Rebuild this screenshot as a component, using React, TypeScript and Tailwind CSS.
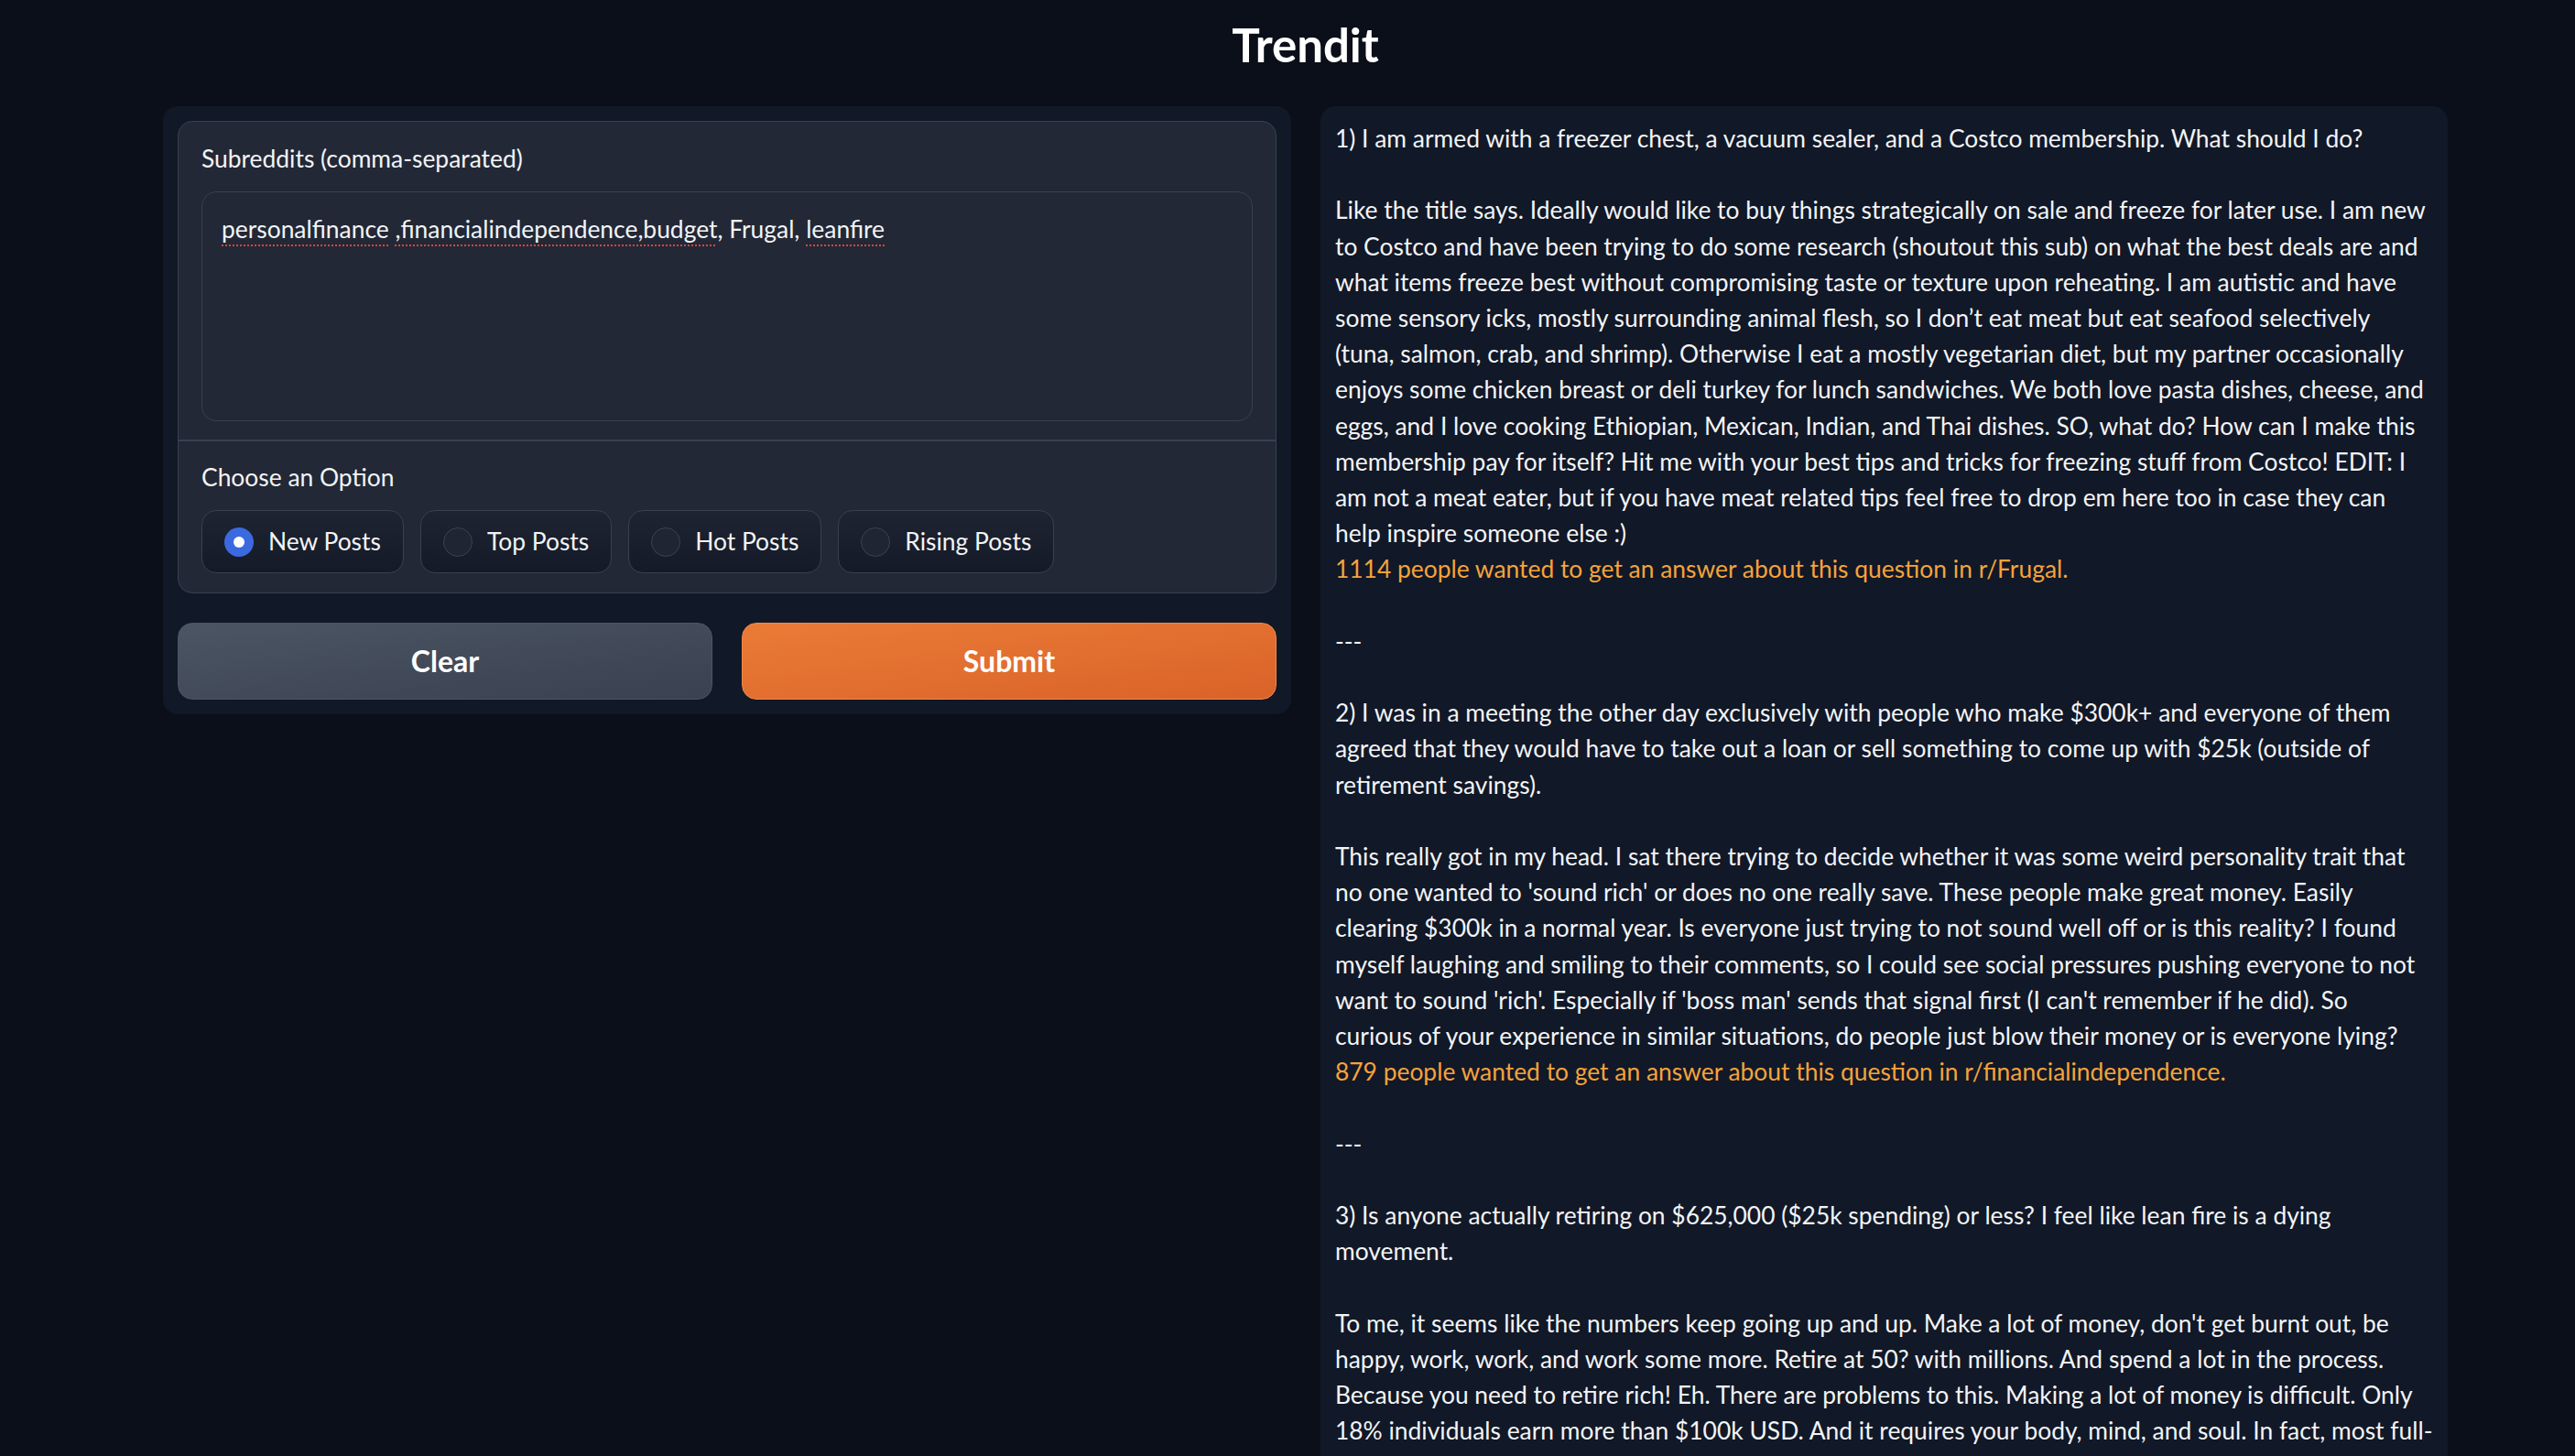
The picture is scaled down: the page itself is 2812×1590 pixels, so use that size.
const FONT = 'Lato, "Noto Sans", sans-serif'

type Line = string | { hl: string }

// lines broken where the reference breaks them
const POSTS: Line[] = [
  '1) I am armed with a freezer chest, a vacuum sealer, and a Costco membership. What should I do?',
  '',
  'Like the title says. Ideally would like to buy things strategically on sale and freeze for later use. I am new',
  'to Costco and have been trying to do some research (shoutout this sub) on what the best deals are and',
  'what items freeze best without compromising taste or texture upon reheating. I am autistic and have',
  'some sensory icks, mostly surrounding animal flesh, so I don’t eat meat but eat seafood selectively',
  '(tuna, salmon, crab, and shrimp). Otherwise I eat a mostly vegetarian diet, but my partner occasionally',
  'enjoys some chicken breast or deli turkey for lunch sandwiches. We both love pasta dishes, cheese, and',
  'eggs, and I love cooking Ethiopian, Mexican, Indian, and Thai dishes. SO, what do? How can I make this',
  'membership pay for itself? Hit me with your best tips and tricks for freezing stuff from Costco! EDIT: I',
  'am not a meat eater, but if you have meat related tips feel free to drop em here too in case they can',
  'help inspire someone else :)',
  { hl: '1114 people wanted to get an answer about this question in r/Frugal.' },
  '',
  '---',
  '',
  '2) I was in a meeting the other day exclusively with people who make $300k+ and everyone of them',
  'agreed that they would have to take out a loan or sell something to come up with $25k (outside of',
  'retirement savings).',
  '',
  'This really got in my head. I sat there trying to decide whether it was some weird personality trait that',
  "no one wanted to 'sound rich' or does no one really save. These people make great money. Easily",
  'clearing $300k in a normal year. Is everyone just trying to not sound well off or is this reality? I found',
  'myself laughing and smiling to their comments, so I could see social pressures pushing everyone to not',
  "want to sound 'rich'. Especially if 'boss man' sends that signal first (I can't remember if he did). So",
  'curious of your experience in similar situations, do people just blow their money or is everyone lying?',
  { hl: '879 people wanted to get an answer about this question in r/financialindependence.' },
  '',
  '---',
  '',
  '3) Is anyone actually retiring on $625,000 ($25k spending) or less? I feel like lean fire is a dying',
  'movement.',
  '',
  "To me, it seems like the numbers keep going up and up. Make a lot of money, don't get burnt out, be",
  'happy, work, work, and work some more. Retire at 50? with millions. And spend a lot in the process.',
  'Because you need to retire rich! Eh. There are problems to this. Making a lot of money is difficult. Only',
  '18% individuals earn more than $100k USD. And it requires your body, mind, and soul. In fact, most full-',
]

function Radio({ label, checked }: { label: string; checked?: boolean }) {
  return (
    <div className="flex h-[69px] items-center gap-[16px] rounded-[16px] border border-[#374151] bg-gradient-to-b from-[#1e2431] to-[#141a28] px-[24px]">
      {checked ? (
        <span className="flex h-[32px] w-[32px] items-center justify-center rounded-full bg-[#3b6ae0]">
          <span className="h-[12px] w-[12px] rounded-full bg-white" />
        </span>
      ) : (
        <span className="h-[32px] w-[32px] rounded-full border-[1.5px] border-[#3a4250] bg-[#1f2532]" />
      )}
      <span className="text-[26.4px] leading-[39.2px] text-[#f3f4f6]">{label}</span>
    </div>
  )
}

const misspelt = 'underline decoration-[#d9463f] decoration-dotted decoration-2 underline-offset-[7px]'

export default function App() {
  return (
    <div className="min-h-screen overflow-hidden bg-[#0b0f19] text-[#f3f4f6]" style={{ fontFamily: FONT }}>
      <div className="ml-[178px] w-[2495px]">
        <h1 className="h-[116px] pt-[23px] text-center text-[51px] font-bold leading-none text-white">Trendit</h1>
        <div className="flex items-start gap-[32px]">
          <div className="w-[1232px] shrink-0 rounded-[16px] bg-[#111827] p-[16px]">
            <div className="overflow-hidden rounded-[16px] border border-[#374151] bg-[#222836]">
              <div className="px-[25px] pb-[20px] pt-[21px]">
                <div className="text-[26.4px] leading-[39.2px]">Subreddits (comma-separated)</div>
                <div className="mt-[16px] h-[251px] rounded-[16px] border border-[#374151] bg-[#222836] px-[21px] pt-[21px] text-[26.4px] leading-[39.2px]">
                  <span className={misspelt}>personalfinance</span>{' '}
                  <span className={misspelt}>,financialindependence,budget</span>, Frugal,{' '}
                  <span className={misspelt}>leanfire</span>
                </div>
              </div>
              <div className="border-t-2 border-[#374151] px-[25px] pb-[21px] pt-[20px]">
                <div className="text-[26.4px] leading-[39.2px]">Choose an Option</div>
                <div className="mt-[16px] flex gap-[18px]">
                  <Radio label="New Posts" checked />
                  <Radio label="Top Posts" />
                  <Radio label="Hot Posts" />
                  <Radio label="Rising Posts" />
                </div>
              </div>
            </div>
            <div className="mt-[32px] grid grid-cols-2 gap-[32px]">
              <button className="h-[84px] rounded-[16px] border border-[#4b5563] bg-gradient-to-br from-[#4b5563] to-[#3a4150] text-[32px] font-bold text-white">
                Clear
              </button>
              <button className="h-[84px] rounded-[16px] border border-[#f08a47] bg-gradient-to-br from-[#ea7b36] to-[#da6229] text-[32px] font-bold text-white">
                Submit
              </button>
            </div>
          </div>
          <div className="min-h-[1600px] flex-1 rounded-[16px] bg-[#111827] px-[16px] pt-[16px]">
            <div className="whitespace-pre text-[26.4px] leading-[39.2px]">
              {POSTS.map((line, i) =>
                typeof line === 'string' ? (
                  <div key={i}>{line || ' '}</div>
                ) : (
                  <div key={i} className="text-[#f5a33b]">
                    {line.hl}
                  </div>
                ),
              )}
            </div>
          </div>
        </div>
      </div>
    </div>
  )
}
